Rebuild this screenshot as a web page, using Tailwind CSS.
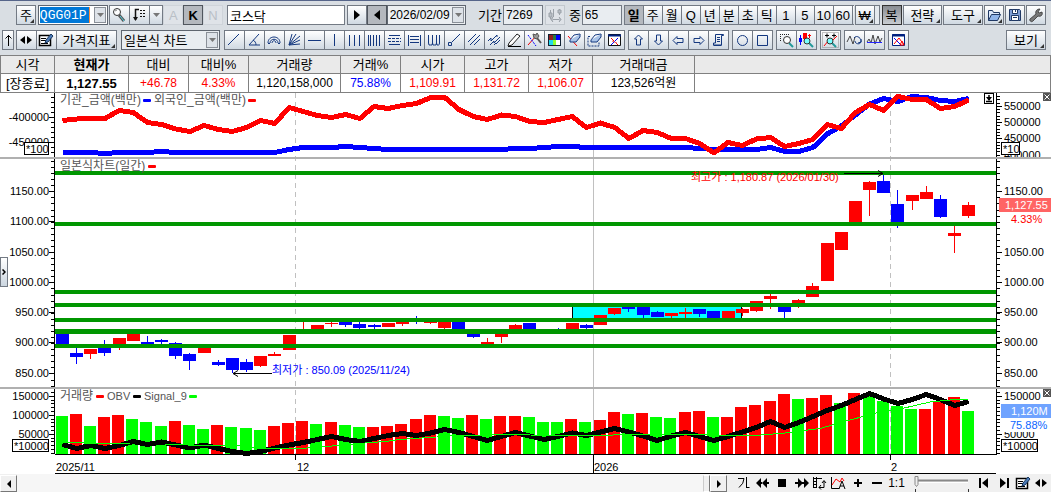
<!DOCTYPE html>
<html lang="ko">
<head>
    <meta charset="UTF-8">
    <meta name="viewport" content="width=device-width, initial-scale=1.0">
    <title>코스닥 종합차트</title>
    <script src="https://cdn.jsdelivr.net/npm/@tailwindcss/browser@4"></script>
</head>
<body class="bg-white font-['Liberation_Sans','Noto_Sans_CJK_KR',sans-serif] text-black">

<!-- Toolbars -->
<header class="bg-[#d9dee3] border-t border-[#56658a] h-[55px] pt-1 flex flex-col gap-[5px] overflow-hidden">
    <div class="flex items-center h-5 pl-4 pr-[5px] text-[13px] leading-none whitespace-nowrap">
        <button class="relative w-5 h-5 border border-[#737a84] bg-linear-to-b from-white to-[#d0d9e2]">주<i class="absolute right-px bottom-px border-2 border-transparent border-r-[#333] border-b-[#333]"></i></button>
        <div class="ml-[2px] w-[71px] h-5 flex items-center border border-[#5f6670] bg-white p-px">
            <input aria-label="종목코드" value="QGG01P" class="w-[50px] h-4 bg-[#0078d7] text-white border-r border-[#ff9040] font-['Liberation_Mono',monospace] text-[13px] outline-none">
            <button aria-label="종목 목록" class="ml-auto w-3 h-4 flex items-center justify-center border border-[#8a9098] bg-[#dde2e8]"><svg width="7" height="4"><path d="M0 0h7L3.500 4z" fill="#777"/></svg></button>
        </div>
        <div class="ml-px flex h-5 border-l border-y border-[#737a84] bg-linear-to-b from-white to-[#d0d9e2]">
            <button aria-label="종목 검색" class="w-5 border-r border-[#737a84]"><svg width="19" height="18" fill="none"><path d="M9 9l5 6" stroke="#555" stroke-width="3"/><path d="M10 10l4 5" stroke="#4fd0e0"/><circle cx="7" cy="6" r="3.500" fill="#fff" stroke="#333"/><path d="M5 5l2-1" stroke="#888"/></svg></button>
            <button aria-label="목록" class="w-5 border-r border-[#737a84]"><svg width="19" height="18" fill="none" stroke="#111"><path d="M9 3.500H5.500V14" stroke-width="1.500"/><path d="M3 11l2.500 4L8 11z" fill="#111" stroke="none"/><path d="M10 4.500h2m1 0h2M10 7.500h2m1 0h2M10 10.500h2m1 0h2"/></svg></button>
            <button aria-label="목록 열기" class="w-[13px] border-r border-[#737a84] flex items-center justify-center"><svg width="7" height="4"><path d="M0 0h7L3.500 4z" fill="#777"/></svg></button>
        </div>
        <button class="w-5 h-5 border border-[#cfd4da] bg-[#dfe3e8] text-[#b9bfc6]" disabled>A</button>
        <button class="w-5 h-5 border border-[#50565e] bg-[#b4b8be] font-bold">K</button>
        <button class="w-5 h-5 border border-[#cfd4da] bg-[#dfe3e8] text-[#b9bfc6]" disabled>N</button>
        <input aria-label="종목명" value="코스닥" class="ml-1 w-[118px] h-5 border border-[#737a84] bg-white pl-[2px] text-[13px] outline-none">
        <button aria-label="다음 종목" class="ml-[2px] w-5 h-5 flex items-center justify-center border border-[#737a84] bg-linear-to-b from-white to-[#d0d9e2]"><svg width="6" height="10"><path d="M0 0l6 5-6 5z"/></svg></button>
        <button aria-label="이전 종목" class="w-5 h-5 flex items-center justify-center border border-[#50565e] bg-[#b4b8be]"><svg width="6" height="10"><path d="M6 0L0 5l6 5z"/></svg></button>
        <div class="w-20 h-5 flex items-center border border-[#5f6670] bg-[#eceff2] p-px">
            <input aria-label="일자" value="2026/02/09" class="w-[63px] h-4 pl-px text-xs outline-none">
            <button aria-label="달력" class="ml-auto w-3 h-4 flex items-center justify-center border border-[#8a9098] bg-[#dde2e8]"><svg width="7" height="4"><path d="M0 0h7L3.500 4z" fill="#777"/></svg></button>
        </div>
        <label for="period" class="ml-3 w-[25px]">기간</label>
        <input id="period" value="7269" class="w-10 h-5 border border-[#737a84] bg-[#e9edf1] pl-[2px] text-xs outline-none">
        <button aria-label="봉 이동" disabled class="ml-[2px] w-5 h-5 border border-[#c2c8ce] bg-[#dfe3e8]"><svg width="18" height="18" stroke="#9aa1a8"><path d="M4.500 4v9M7.500 3v8M13.500 3v6M5 13.500h10" fill="none"/><path d="M3 7h3v4H3zM12 4h3v3h-3zM7 11l-2 2.500L7 16m6-5l2 2.500L13 16" fill="#b9bfc6"/></svg></button>
        <label for="bars" class="ml-1 w-[13px]">중</label>
        <input id="bars" value="65" class="w-10 h-5 border border-[#737a84] bg-[#e9edf1] pl-[2px] text-xs outline-none">
        <div id="periods" class="ml-[2px] flex h-5 border-l border-y border-[#737a84] bg-linear-to-b from-white to-[#d0d9e2]"></div>
        <button class="relative ml-px w-5 h-5 border border-[#737a84] bg-linear-to-b from-white to-[#d0d9e2]">₩<i class="absolute right-px bottom-px border-2 border-transparent border-r-[#333] border-b-[#333]"></i></button>
        <span class="w-[5px] h-5 border border-l-0 border-[#737a84] bg-[#e4e9ee]"></span>
        <button class="ml-[2px] w-5 h-5 border border-[#333] bg-linear-to-b from-[#888c92] to-[#c8ccd0]">복</button>
        <button class="relative ml-px w-10 h-5 border border-[#737a84] bg-linear-to-b from-white to-[#d0d9e2]">전략<i class="absolute right-px bottom-px border-2 border-transparent border-r-[#333] border-b-[#333]"></i></button>
        <button class="relative ml-px w-10 h-5 border border-[#737a84] bg-linear-to-b from-white to-[#d0d9e2]">도구<i class="absolute right-px bottom-px border-2 border-transparent border-r-[#333] border-b-[#333]"></i></button>
        <div class="ml-px flex gap-px">
            <button aria-label="열기" class="relative w-5 h-5 border border-[#737a84] bg-linear-to-b from-white to-[#d0d9e2]"><svg width="18" height="18" fill="#dce8fa" stroke="#1f3864"><path d="M3.500 14.500v-10h4l1 2h6v2"/><path d="M3.500 14.500l3-6h9l-3 6z" fill="#8fb4ea"/></svg><i class="absolute right-px bottom-px border-2 border-transparent border-r-[#333] border-b-[#333]"></i></button>
            <button aria-label="저장" class="w-5 h-5 border border-[#737a84] bg-linear-to-b from-white to-[#d0d9e2]"><svg width="18" height="18" stroke="#1f3864"><path d="M3.500 3.500h10l1 1v10h-11z" fill="#7f9fd8"/><path d="M6.500 3.500h5v4h-5zM5.500 9.500h7v5h-7z" fill="#fff"/><path d="M9.500 4v2M7 11.500h4"/></svg></button>
            <button aria-label="설정" class="w-5 h-5 border border-[#737a84] bg-linear-to-b from-white to-[#d0d9e2]"><svg width="18" height="18"><path d="M3 13l6-5c-1-3 1-5 4-5l-2 3 1 1 3-1c1 3-1 5-4 4l-5 5c-2 2-4-1-3-2z" fill="#777" stroke="#333" stroke-width=".8"/></svg></button>
        </div>
    </div>

    <div class="flex items-center h-5 pl-[2px] pr-[5px] text-[13px] leading-none whitespace-nowrap">
        <button aria-label="위로" class="w-3 h-5 flex items-center justify-center border border-[#737a84] bg-linear-to-b from-white to-[#d0d9e2]"><svg width="7" height="12" fill="none" stroke="#000"><path d="M3.500 1v11M.5 4.500l3-3 3 3"/></svg></button>
        <div class="ml-[2px] flex h-5 border-l border-y border-[#737a84] bg-linear-to-b from-white to-[#d0d9e2]">
            <button aria-label="좌우 이동" class="w-5 border-r border-[#737a84]"><svg width="19" height="18"><path d="M3 9l5-4v8zM15 9l-5-4v8z"/><path d="M6 9h2m2 0h2" stroke="#000" stroke-width="2"/></svg></button>
            <button aria-label="편집" class="w-5 border-r border-[#737a84]"><svg width="19" height="18" fill="none" stroke="#000"><path d="M2.500 4.500h11v10h-11z" fill="#fff" stroke-width="1.500"/><path d="M4 7.500h5M4 9.500h5M4 12.500h7"/><path d="M14 3l2 2-5 6-3 1 1-3z" fill="#4c7bb8" stroke="#17365d"/></svg></button>
            <button class="relative w-[60px] border-r border-[#737a84]">가격지표<i class="absolute right-px bottom-px border-2 border-transparent border-r-[#333] border-b-[#333]"></i></button>
        </div>
        <div class="relative ml-1 w-[99px] h-5 border border-[#5f6670] bg-[#e9edf1]">
            <select aria-label="차트 종류" class="w-full h-[18px] appearance-none pl-[2px] outline-none"><option>일본식 차트</option></select>
            <span class="pointer-events-none absolute right-px top-px w-3 h-4 flex items-center justify-center border border-[#8a9098] bg-[#dde2e8]"><svg width="7" height="4"><path d="M0 0h7L3.500 4z" fill="#777"/></svg></span>
        </div>
        <div id="tools" class="ml-1 flex gap-[3px]"></div>
        <button class="relative ml-auto w-10 h-5 border border-[#737a84] bg-linear-to-b from-white to-[#d0d9e2]">보기<i class="absolute right-px bottom-px border-2 border-transparent border-r-[#333] border-b-[#333]"></i></button>
    </div>
</header>

<!-- Quote summary -->
<table class="w-full table-fixed border-collapse text-center text-xs leading-none whitespace-nowrap">
    <colgroup>
        <col class="w-[54px]"><col class="w-[74px]"><col class="w-[60px]"><col class="w-[60px]"><col class="w-[92px]"><col class="w-[60px]"><col class="w-16"><col class="w-16"><col class="w-16"><col class="w-[102px]"><col>
    </colgroup>
    <thead class="bg-[#eaeaea] text-[13px]">
        <tr class="h-[18px] *:border *:border-[#808080] *:p-0 *:font-normal">
            <th>시각</th><th><b>현재가</b></th><th>대비</th><th>대비%</th><th>거래량</th><th>거래%</th><th>시가</th><th>고가</th><th>저가</th><th>거래대금</th><th></th>
        </tr>
    </thead>
    <tbody>
        <tr class="h-[19px] *:border *:border-[#808080] *:p-0">
            <td class="text-[13px]">[장종료]</td><td class="text-[13px] font-bold">1,127.55</td><td class="text-[#f00]">+46.78</td><td class="text-[#f00]">4.33%</td><td>1,120,158,000</td><td class="text-[#00f]">75.88%</td><td class="text-[#f00]">1,109.91</td><td class="text-[#f00]">1,131.72</td><td class="text-[#f00]">1,106.07</td><td>123,526억원</td><td></td>
        </tr>
    </tbody>
</table>

<!-- Chart -->
<main class="relative">
    <svg id="chart" viewBox="0 93 1051 381" class="block w-full h-auto text-[11px]" role="img" aria-label="코스닥 일봉 차트"></svg>
    <button aria-label="패널 열기" class="absolute left-0 top-[43%] w-2 h-[30px] flex items-center justify-center border border-[#737a84] bg-linear-to-b from-white to-[#ccd6e0]"><svg width="4" height="6" fill="none" stroke="#000" stroke-width="1.500"><path d="M.5 .5L3 3 .5 5.500"/></svg></button>
</main>

<!-- Scroll and playback bar -->
<footer class="flex h-[18px] items-stretch bg-[#f0f0f0]">
    <button aria-label="왼쪽으로" class="w-[17px] mt-px flex items-center justify-center border border-white border-r-[#777] border-b-[#777] bg-[#f0f0f0]"><svg width="4" height="8"><path d="M4 0v8L0 4z"/></svg></button>
    <div class="flex-1 flex justify-end bg-[#f6f6f6]"><span class="w-[7px] mt-px border border-white border-l-[#ccc] border-r-[#777] bg-[#f0f0f0]"></span></div>
    <button aria-label="오른쪽으로" class="w-[17px] mt-px mr-2 flex items-center justify-center border border-white border-r-[#777] border-b-[#777] bg-[#f0f0f0]"><svg width="4" height="8"><path d="M0 0v8l4-4z"/></svg></button>
    <div id="playback" class="flex items-center text-xs leading-none"></div>
    <svg width="60" height="18" class="ml-1" role="img" aria-label="배율"><path d="M6 6.500h52" stroke="#888" stroke-width="2"/><path d="M6 8.500h52" stroke="#fff"/><path d="M5 2.500h3v8l-1.500 2L5 10.500z" fill="#eee" stroke="#888"/><path d="M5.500 15v3M58.500 15v3" stroke="#333"/></svg>
    <div id="ends" class="ml-[5px] flex items-center"></div>
</footer>

<script>
    // Period buttons
    const periods = ['일', '주', '월', 'Q', '년', '분', '초', '틱', '1', '5', '10', '60'];
    document.getElementById('periods').innerHTML = periods.map((p, i) =>
        `<button class="w-[19px] border-r border-[#737a84] ${i === 0 ? 'bg-[#b4b8be] font-bold' : ''}">${p}</button>`).join('') + '<span class="w-px"></span>';

    // Drawing tools, one array per button group
    const tools = [
        [
            ['추세선', '<path d="M3 14L14 3"/>'],
            ['각도', '<path d="M14 3L4 14h11M8 9c2 1 3 3 3 5"/>'],
            ['원호', '<path d="M3 12c0-8 12-8 12 0M5 12c0-5 8-5 8 0M7 12c0-3 4-3 4 0M3 12.500h2m8 0h2"/>'],
            ['부채꼴', '<path d="M4 14L7 3M4 14l7-11M4 14L15 5M4 14l11-5M4 14l11-1"/>'],
            ['수평선', '<path d="M3 9.500h13"/>'],
            ['수직선', '<path d="M9.500 3v12"/>'],
            ['간격선', '<path d="M4.500 4v11M9.500 4v11M14.500 4v11"/>'],
            ['피보나치 간격', '<path d="M3.500 4v11M5.500 4v11M8.500 4v11M11.500 4v11M14.500 4v11"/>'],
            ['되돌림', '<path d="M4 4.500h11M4 13.500h11"/><path d="M3 7.500h13M3 10.500h13" stroke-dasharray="3 1"/>'],
            ['목표가', '<path d="M3.500 4v11M15.500 4v11M5 5.500h9M5 8.500h9M5 11.500h9"/>'],
            ['사이클', '<path d="M3.500 4v8q0 3 2 2q2 1 2-2V4m0 8q0 3 2 2q2 1 2-2V4m0 8q0 3 2 2q1 0 1-2V4"/>'],
            ['기준선', '<path d="M7 11l8-8"/><path d="M3.500 11.500h3v3h-3z"/>'],
            ['평행선', '<path d="M3 11l8-8M5 14L15 4M9 14l6-6"/>'],
            ['채널', '<path d="M3 10l3-3v3l6-6v2M5 14l4-4v2l6-6M9 14l2-2v1l4-4"/>'],
            ['연필', '<path d="M4 12l8-9 3 2-8 9-4 1z" fill="#fff" stroke="#222"/><path d="M3 15.500h13" stroke="#000"/>'],
            ['도구 설정', '<path d="M3 14L11 5" stroke="#e00"/><path d="M3 4l8 11" stroke="#00f" stroke-dasharray="2 1"/><path d="M16 12L12 7" stroke="#555" stroke-width="2"/><path d="M8 3l3 1 1-2 2 3-2 3-3-1z" fill="#999" stroke="#555"/>'],
            ['색상', '<path d="M3 3h13v12H3z" fill="#123" stroke="none"/><path d="M4 4h4v5H4z" fill="#902020" stroke="none"/><path d="M8 4h3v5H8z" fill="#287b40" stroke="none"/><path d="M11 4h4v5h-4z" fill="#00f" stroke="none"/><path d="M4 9h4v5H4z" fill="#25d8f0" stroke="none"/><path d="M8 9h3v5H8z" fill="#90ff30" stroke="none"/><path d="M11 9h4v5h-4z" fill="#fff" stroke="none"/>'],
            ['지우개', '<path d="M3 5l9 10" stroke="#f00"/><path d="M5 9l4-5 6-1-4 6z" fill="#fff"/><path d="M5 9v2h6l4-5V3" fill="#aac4e8"/>'],
            ['영역 지우기', '<path d="M3 6.500V15h11v-4M3 5.500h3" stroke-dasharray="2 1"/><path d="M6 9l4-5 6-1-4 6z" fill="#fff"/><path d="M6 9v2h6l4-5V3" fill="#aac4e8"/>'],
            ['전체 지우기', '<path d="M3.500 3.500h12v11h-12z" fill="#fff" stroke="#111"/><path d="M3 4.500h13" stroke="#002080" stroke-width="2"/><path d="M6 7l7 7" stroke="#f00"/><path d="M13 7l-7 7" stroke="#00f"/><path d="M7 10l5 2" stroke="#e66"/>']
        ],
        [
            ['위 화살표', '<path d="M9.500 4l4 4h-2v6h-4V8h-2z"/>'],
            ['아래 화살표', '<path d="M9.500 14l4-4h-2V4h-4v6h-2z"/>'],
            ['왼쪽 화살표', '<path d="M4 9.500l4-4v2h6v4H8v2z"/>'],
            ['오른쪽 화살표', '<path d="M15 9.500l-4-4v2H5v4h6v2z"/>'],
            ['메모', '<path d="M6.500 3.500h8v1h-2v9.500h-8v-2h2zM4.500 14.500h8M8 6.500h3M8 8.500h3M8 10.500h3"/>']
        ],
        [
            ['원', '<circle cx="9.500" cy="9.500" r="5"/>'],
            ['사각형', '<path d="M4.500 4.500h10v10h-10z"/>']
        ],
        [
            ['영역 확대', '<path d="M3 3.500h9M3.500 3v8" stroke="#222" stroke-dasharray="1 1"/><path d="M12 12l4 4" stroke="#299" stroke-width="2"/><circle cx="10" cy="9" r="3.500" stroke="#333" fill="#fff"/>'],
            ['봉 확대', '<path d="M3.500 4v10" stroke="#00f"/><path d="M2 7h3v4H2z" fill="#00f" stroke="none"/><path d="M6 2h4v6H6z" fill="#f00" stroke="none"/><path d="M11 4.500h3M12.500 3v4" stroke="#f00"/><path d="M12 12l4 4" stroke="#299" stroke-width="2"/><circle cx="10" cy="10" r="3" stroke="#333" fill="#7ff"/>']
        ],
        [
            ['전체 보기', '<path d="M1.500 1.500h16v15h-16z" stroke="#888" stroke-dasharray="1 1"/><path d="M4 4.500h4m3 0h4M6 2.500v4M13 2.500v4" stroke="#000"/><path d="M3 15L8 9l2 2 6-6" stroke="#f00"/><path d="M11 12l4 4" stroke="#299" stroke-width="2"/><circle cx="9" cy="10" r="3" stroke="#333" fill="#7ff"/>']
        ],
        [
            ['파동', '<path d="M2 11l3-6 3 8 2-7" stroke="#444"/><path d="M9 7c3-4 8 1 7 4s-6 2-6-1" /><path d="M13 12l3-1v-3"/>'],
            ['진동', '<path d="M2 11l2-3 2 4 2-8 2 9 3-8 2 6 2-4" stroke="#444"/><path d="M2 11.500h15" stroke="#22f"/>']
        ],
        [
            ['분석', '<path d="M3.500 3.500h12v11h-12z" fill="#fff" stroke="#002080"/><path d="M3 4.500h13" stroke="#002080" stroke-width="2"/><path d="M5 7l7 7" stroke="#00f"/><path d="M5 13l5-6 5 7" stroke="#f00"/><path d="M11 14l2-4 2 4z" stroke="#f00"/>']
        ]
    ];
    document.getElementById('tools').innerHTML = tools.map(group => `
        <div class="flex h-5 border-l border-y border-[#737a84] bg-linear-to-b from-white to-[#d0d9e2]">
            ${group.map(([name, icon]) => `<button aria-label="${name}" class="w-5 border-r border-[#737a84]"><svg width="19" height="18" fill="none" stroke="#14387f">${icon}</svg></button>`).join('')}
        </div>`).join('');

    // Playback controls: name, width class, icon
    const playback = [
        ['기준', 'w-[19px]', '<path d="M3 4.500h6q0 5-5 9M11.500 3v11M11.500 13.500h3" fill="none" stroke="#000"/>'],
        ['뒤로 재생', 'w-[19px]', '<path d="M7 4v10L2 9zM13 4v10L8 9z"/><path d="M6 9h2m4 0h3" stroke="#000" stroke-width="2"/>'],
        ['정지', 'w-[19px]', '<path d="M5 5h8v8H5z"/>'],
        ['앞으로 재생', 'w-[19px]', '<path d="M6 4v10l5-5zM12 4v10l5-5z"/><path d="M3 9h4m3 0h3" stroke="#000" stroke-width="2"/>'],
        ['회전', 'w-[19px]', '<path d="M2.500 3v11M5.500 3v11M2 4.500h9M2 7.500h3M2 10.500h3M2 13.500h3M8 13.500h5V7M11 9l2-2.500L15 9M10 11l-2 2.500 2 2" fill="none" stroke="#000"/>'],
        ['자동', 'w-[19px]', '<path d="M1.500 3v11.500H9" fill="none" stroke="#000"/><path d="M2 11l4-6 4 3 2-4 2 3" fill="none" stroke="#f00"/><path d="M9 15l3-8 3 8m-5-3h4" fill="none" stroke="#000"/>'],
        ['확대', 'w-[19px]', '<path d="M5 9h8M9 5v8" stroke="#000" stroke-width="2"/>'],
        ['축소', 'w-[19px]', '<path d="M4 9h10" stroke="#000" stroke-width="2"/>']
    ];
    const ends = [
        ['처음', 'w-5', '<path d="M5 4v10" stroke="#000" stroke-width="2"/><path d="M13 4v10L7 9z"/>'],
        ['마지막', 'w-5', '<path d="M5 4v10l6-5z"/><path d="M13 4v10" stroke="#000" stroke-width="2"/>'],
        ['편집', 'w-[18px]', '<path d="M1.500 4.500h11v10h-11z" fill="#fff" stroke="#000" stroke-width="1.500"/><path d="M3 7.500h5M3 9.500h5M3 12.500h7" stroke="#000"/><path d="M13 3l2 2-5 6-3 1 1-3z" fill="#4c7bb8" stroke="#17365d"/>'],
        ['좌우 이동', 'w-[18px]', '<path d="M2 9l5-4v8zM14 9L9 5v8z"/>']
    ];
    const iconButton = ([name, width, icon]) => `<button aria-label="${name}" class="${width} h-[18px]"><svg width="18" height="18">${icon}</svg></button>`;
    document.getElementById('playback').innerHTML = playback.map(iconButton).join('') + '<button class="w-[19px]">1:1</button>';
    document.getElementById('ends').innerHTML = ends.map(iconButton).join('');

    // Candles: colour, body top, body bottom, high, low (chart units)
    const candles = [
        ['b',332,344,332,344],['b',353,357,346,364],['r',349,354,349,359],['b',347,353,340,356],['r',338,348,338,350],['r',332,341,332,341],
        ['b',342,345,336,345],['b',340,342,339,344],['b',343,356,342,359],['b',354,361,353,370],['r',346,353,346,353],['b',362,365,360,366],
        ['b',358,370,358,373],['b',362,370,359,372],['r',356,366,356,367],['r',354,356,352,356],['r',335,350,335,350],['r',330,332,322,332],
        ['r',325,331,325,331],['r',323,324,322,327],['b',321,325,321,327],['b',324,328,322,329],['b',325,327,324,329],['r',323,327,323,327],
        ['r',320,324,320,326],['b',319,321,316,324],['r',320,323,320,324],['r',321,328,321,329],['b',320,330,320,330],['b',333,337,333,338],
        ['r',342,345,338,345],['r',332,337,332,343],['r',325,330,324,330],['b',323,330,323,330],['b',330,332,330,332],['b',330,332,328,332],
        ['r',323,330,323,330],['b',325,328,324,330],['r',315,325,315,325],['r',308,314,308,315],['b',306,309,306,312],['b',306,315,306,318],
        ['b',312,317,311,317],['r',313,316,313,318],['r',312,314,308,318],['b',309,314,309,317],['b',311,318,311,318],['r',311,318,311,318],
        ['r',309,313,308,316],['r',301,311,301,312],['r',296,299,294,309],['b',306,312,306,318],['r',300,304,299,308],['r',286,297,283,297],
        ['r',243,281,243,281],['r',232,250,232,250],['r',201,222,201,222],['r',182,190,181,216],['b',181,193,174,193],['b',204,226,190,228],
        ['r',195,201,195,210],['r',192,199,186,199],['b',199,217,195,218],['r',233,236,226,253],['r',205,216,202,218]
    ];
    // Investor flows
    const foreign = [120.5,119,118.5,118.5,110.5,112.5,122.5,124.5,129,131.5,125.5,129.5,131.5,127.5,120.5,123.5,107.5,111.5,115.5,117.5,114.5,118.5,106.5,108.5,105.5,103.5,97.5,97.5,109.5,116.5,119.5,115,116.5,121.5,122.5,119.5,116.5,127.5,123,127.5,138.5,130.5,132.5,138.5,138.5,143.5,153,142.5,145.5,139,137.5,146.5,143.5,139.5,124.5,128.5,112.5,104.5,110.5,96.5,99.5,99.5,108.5,106.5,100];
    const institution = [152.5,152.5,152.5,153.5,152.5,152.5,152.5,151.5,152.5,152.5,152.5,152.5,152.5,152.5,152.5,152.5,149.5,147.5,147.5,147.5,146.5,147.5,148.5,149.5,149.5,149.5,149.5,149.5,149.5,149.5,149.5,149.5,148.5,148.5,147.5,146.5,146.5,147.5,147.5,147.5,147.5,147.5,147.5,147.5,147.5,148.5,149.5,149.5,149.5,149.5,147.5,151.5,151.5,147.5,134,126,115,104,98.5,101.5,96.5,97.5,100.5,101.5,98.5];
    // Volume bar tops and directions, OBV line, signal line
    const volume = [416,414,426,417,415,419,422,426,421,425,429,425,427,428,430,426,423,421,424,422,425,427,427,426,424,419,415,416,418,415,419,416,416,417,422,422,419,422,420,412,414,413,417,418,412,411,417,417,407,405,401,394,399,398,395,403,393,396,401,406,409,409,401,397,411];
    const direction = 'grgrrgggrggrgggrrrgrggrrrrrggrgrrgggrgrrgrggrrgrrrrrgrrgrggggrrrg';
    const obv = [444.5,448.5,445.5,448.5,445.5,441.5,444.5,442,445,448,445,448.5,451.5,453.5,451.5,448,445,442.5,439.5,436.5,439.5,441.5,438.5,435.5,433.5,435.5,433,429.5,432.5,436.5,440.5,436.5,432.5,436,439.5,436.5,433,435.5,432,428.5,432,436,440.5,436,432.5,436.5,440.5,436.5,432,427.5,421.5,427.5,422.5,416.5,410.5,405.5,399.5,393.5,399,403.5,399.5,394.5,399.5,405.5,401.5];
    const signal = '62,442 95,443.5 130,444 165,444 200,445.5 235,445.5 250,447 268,448.5 300,448.5 320,447 345,445 365,443 385,441.5 400,439.5 415,438.5 430,437.5 450,436 500,434.5 560,435.5 600,436 620,434.5 700,434.5 720,436 755,435.5 785,433 820,428.5 850,420 880,412 900,409 930,402 950,400 968,399.5';
    const levels = [[173, 4], [224, 4], [292, 4], [305, 4], [320, 4], [331.5, 5], [346, 4]];

    const x = i => 62.5 + i * 14.16;
    const hex = { r: '#f00', b: '#00f', g: '#0f0' };
    const line = (values, colour, width) => `<polyline points="${values.map((v, i) => x(i) + ',' + v).join(' ')}" fill="none" stroke="${colour}" stroke-width="${width}" stroke-linejoin="round"/>`;
    const text = (tx, ty, str, colour = '#000', extra = '') => `<text x="${tx}" y="${ty}" fill="${colour}" ${extra}>${str}</text>`;

    // Scale ticks between two heights; dir is -1 for the left axis and 1 for the right
    function ticks(ax, from, to, step, dir) {
        let d = '';
        for (let y = from; y <= to; y += step) d += `M${ax} ${Math.round(y) + 0.5}h${3 * dir}`;
        return `<path d="${d}" stroke="#000"/>`;
    }
    function axis(labels, dir) {
        return labels.map(([y, str]) => {
            const ax = dir < 0 ? 54 : 997;
            return `<path d="M${ax} ${y + 0.5}h${5 * dir}" stroke="#000"/>` +
                text(dir < 0 ? 49 : 1004, y + 4, str, '#000', dir < 0 ? 'text-anchor="end"' : '');
        }).join('');
    }
    const prices = [[191, '1150.00'], [221, '1100.00'], [252, '1050.00'], [282, '1000.00'], [312, '950.00'], [342, '900.00'], [373, '850.00']];
    const volumes = [[396, '150000'], [415, '100000'], [434, '50000']];
    const box = (bx, by, w, str) => `<rect x="${bx}.5" y="${by}.5" width="${w}" height="12" fill="#fff" stroke="#000"/>` + text(bx + 2, by + 11, str);

    let svg = '<g shape-rendering="crispEdges">';
    svg += '<path d="M295.500 93v361M890.500 93v361" stroke="#c0c0c0" stroke-dasharray="5 4"/><path d="M593.500 93v361" stroke="#c0c0c0"/>';
    // Price panel
    svg += '<rect x="572" y="306" width="170" height="14" fill="#0ff"/><path d="M572.500 306v14M741.500 306v14" stroke="#000"/>';
    candles.forEach(([c, top, bottom, high, low], i) => {
        const cx = Math.round(x(i) - 0.5);
        svg += `<rect x="${cx - 6}" y="${top}" width="13" height="${bottom - top}" fill="${hex[c]}"/><rect x="${cx}" y="${high}" width="1" height="${low - high}" fill="${hex[c]}"/>`;
    });
    svg += levels.map(([y, w]) => `<path d="M55 ${y}h941" stroke="#009600" stroke-width="${w}"/>`).join('');
    // Flow panel
    svg += line(institution, '#00f', 5) + line(foreign, '#f00', 5);
    // Volume panel
    volume.forEach((top, i) => {
        svg += `<rect x="${Math.round(x(i)) - 7}" y="${top}" width="12" height="${454 - top}" fill="${hex[direction[i]]}"/>`;
    });
    svg += line(obv, '#000', 5) + `<polyline points="${signal}" fill="none" stroke="#0f0"/>`;
    // Frames and ticks
    svg += '<path d="M54.500 93v361M996.500 93v361M55 454.500h942M55 473.500h941M295.500 454v6M593.500 454v19M890.500 454v6" stroke="#000" fill="none"/>';
    svg += '<path d="M0 158h1051M0 388h1051" stroke="#b0b0b0" stroke-width="2"/>';
    svg += ticks(54, 97, 156, 5, -1) + ticks(54, 161, 386, 6.07, -1) + ticks(54, 392, 453, 3.8, -1);
    svg += ticks(997, 96, 156, 3.25, 1) + ticks(997, 161, 386, 6.07, 1) + ticks(997, 392, 453, 3.8, 1);
    svg += '</g>';

    // Axis labels
    svg += axis([[117, '-400000'], [142, '-450000']], -1) + axis(prices, -1) + axis(volumes, -1);
    svg += axis([[106, '550000'], [122, '500000'], [138, '450000']], 1) + axis(prices.filter(p => p[0] !== 221), 1) + axis(volumes.filter(v => v[0] !== 415), 1);
    svg += '<svg x="1000" y="148" width="51" height="9" viewBox="1000 148 51 9">' + text(1004, 159, '400000') + '</svg>';
    svg += box(24, 142, 24, '*100') + box(1001, 142, 18, '*10') + box(12, 439, 36, '*10000') + box(1001, 439, 36, '*10000');
    svg += text(56, 471, '2025/11') + text(297, 471, '12') + text(594, 471, '2026') + text(891, 471, '2');

    // Current value tags
    svg += '<rect x="999" y="198" width="52" height="14" fill="#ff6464"/>' + text(1005, 209, '1,127.55', '#fff') + text(1011, 223, '4.33%', '#f00');
    svg += '<rect x="1001" y="404" width="50" height="14" fill="#6fa3ff"/><rect x="1001" y="418" width="50" height="14" fill="#fff"/>' + text(1011, 415, '1,120M', '#fff') + text(1010, 429, '75.88%', '#0a64ff');

    // Legends
    const dash = (dx, dy, colour) => `<rect x="${dx}" y="${dy}" width="8" height="3" rx="1" fill="${colour}"/>`;
    svg += text(60, 104, '기관_금액(백만)', '#555', 'font-size="12"') + dash(143, 99, '#00f') + text(154, 104, '외국인_금액(백만)', '#555', 'font-size="12"') + dash(248, 99, '#f00');
    svg += text(60, 170, '일본식차트(일간)', '#555', 'font-size="12"') + dash(148, 165, '#f00');
    svg += text(60, 400, '거래량', '#555', 'font-size="12"') + dash(96, 395, '#f00') + text(107, 400, 'OBV', '#555') + dash(133, 395, '#000') + text(144, 400, 'Signal_9', '#555') + dash(189, 395, '#0f0');

    // High and low notes
    svg += text(691, 181, '최고가 : 1,180.87 (2026/01/30)', '#f00') + text(272, 374, '최저가 : 850.09 (2025/11/24)', '#00f');
    svg += '<path d="M844 173.500h39M878 170.500l5 3-5 3M272 373.500h-39M238 370.500l-5 3 5 3" fill="none" stroke="#000"/>';

    // Panel buttons
    svg += '<rect x="984.500" y="93.500" width="9" height="10" fill="#fff" stroke="#000"/><path d="M989 95v5M986 101.500h6" stroke="#000" stroke-width="1.500"/><path d="M986 97h6l-3 4z"/>';
    [93, 389].forEach(y => {
        svg += `<rect x="1043" y="${y}" width="8" height="8" fill="#555"/><path d="M1044.500 ${y + 1.5}l5 5m0-5l-5 5" stroke="#fff"/>`;
    });
    document.getElementById('chart').innerHTML = svg;
</script>
</body>
</html>
